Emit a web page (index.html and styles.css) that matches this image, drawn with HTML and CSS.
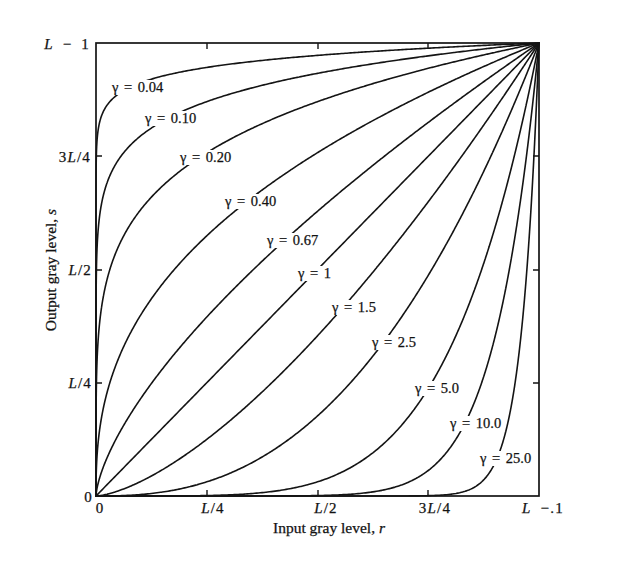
FILE: index.html
```html
<!DOCTYPE html>
<html>
<head>
<meta charset="utf-8">
<title>Gamma transformation curves</title>
<link rel="stylesheet" href="styles.css">
</head>
<body>
<div class="figure">
<svg class="chart" id="chart" width="624" height="569" viewBox="0 0 624 569">
  <g class="curves" id="curves"></g>
  <g class="masks" id="masks"></g>
  <g class="gamma-labels" id="labels">
    <text x="112" y="92">γ = 0.04</text>
    <text x="145" y="123">γ = 0.10</text>
    <text x="180" y="162">γ = 0.20</text>
    <text x="225" y="206">γ = 0.40</text>
    <text x="267" y="245">γ = 0.67</text>
    <text x="298" y="278">γ = 1</text>
    <text x="332" y="312">γ = 1.5</text>
    <text x="372" y="347">γ = 2.5</text>
    <text x="415" y="393">γ = 5.0</text>
    <text x="450" y="428">γ = 10.0</text>
    <text x="480" y="463">γ = 25.0</text>
  </g>
  <rect class="frame" x="96" y="43" width="443" height="453"></rect>
  <path class="ticks" d="M207 43v6M318 43v6M428 43v6M207 496v-6M318 496v-6M428 496v-6M96 156h6M96 270h6M96 383h6M539 156h-6M539 270h-6M539 383h-6"></path>
  <g class="axis-labels">
    <text class="wide" x="90" y="49" text-anchor="end"><tspan class="it">L</tspan> − 1</text>
    <text x="91" y="162" text-anchor="end">3<tspan class="it">L</tspan>/4</text>
    <text x="92" y="275" text-anchor="end"><tspan class="it">L</tspan>/2</text>
    <text x="92" y="388" text-anchor="end"><tspan class="it">L</tspan>/4</text>
    <text x="93" y="502" text-anchor="end">0</text>
    <text x="100" y="513" text-anchor="middle">0</text>
    <text x="213" y="513" text-anchor="middle"><tspan class="it">L</tspan>/4</text>
    <text x="326" y="513" text-anchor="middle"><tspan class="it">L</tspan>/2</text>
    <text x="435" y="513" text-anchor="middle">3<tspan class="it">L</tspan>/4</text>
    <text class="wide" x="543" y="513" text-anchor="middle"><tspan class="it">L</tspan> −.1</text>
    <text class="title" x="329" y="533" text-anchor="middle">Input gray level, <tspan class="it">r</tspan></text>
    <text class="title" x="0" y="0" text-anchor="middle" transform="translate(56 270) rotate(-90)">Output gray level, <tspan class="it">s</tspan></text>
  </g>
</svg>
</div>
<script src="script.js"></script>
</body>
</html>
```

FILE: styles.css
```css
html, body {
  margin: 0;
  padding: 0;
  background: #ffffff;
}

.figure {
  width: 624px;
  height: 569px;
  overflow: hidden;
}

.chart {
  display: block;
  font-family: "Liberation Serif", "Times New Roman", serif;
}

.curves path {
  fill: none;
  stroke: #141414;
  stroke-width: 1.6;
  stroke-linejoin: round;
  stroke-linecap: round;
}

.masks rect {
  fill: #ffffff;
}

.gamma-labels text {
  font-size: 14.5px;
  word-spacing: 2px;
  fill: #121212;
  stroke: #121212;
  stroke-width: 0.25;
}

.frame {
  fill: none;
  stroke: #141414;
  stroke-width: 1.7;
}

.ticks {
  fill: none;
  stroke: #141414;
  stroke-width: 1.4;
}

.axis-labels text {
  font-size: 15px;
  letter-spacing: 1.2px;
  fill: #121212;
  stroke: #121212;
  stroke-width: 0.25;
}

.axis-labels .wide {
  word-spacing: 4px;
}

.axis-labels .title {
  font-size: 15.5px;
  letter-spacing: 0;
}

.it {
  font-style: italic;
}
```

FILE: script.js
```js
(function () {
  var ns = "http://www.w3.org/2000/svg";
  var x0 = 96, y0 = 496, w = 443, h = 453;
  var gammas = [0.04, 0.1, 0.2, 0.4, 0.67, 1, 1.5, 2.5, 5, 10, 25];
  var curves = document.getElementById("curves");
  var N = 240;
  gammas.forEach(function (g) {
    var pts = [];
    for (var i = 0; i <= N; i++) {
      var t = i / N;
      pts.push([t, Math.pow(t, g)]);
      pts.push([Math.pow(t, 1 / g), t]);
    }
    pts.sort(function (a, b) { return a[0] - b[0] || a[1] - b[1]; });
    var d = "";
    pts.forEach(function (p, k) {
      var x = (x0 + p[0] * w).toFixed(2);
      var y = (y0 - p[1] * h).toFixed(2);
      d += (k === 0 ? "M" : "L") + x + " " + y;
    });
    var path = document.createElementNS(ns, "path");
    path.setAttribute("d", d);
    curves.appendChild(path);
  });
  var masks = document.getElementById("masks");
  var labels = document.querySelectorAll("#labels text");
  labels.forEach(function (t) {
    var b = t.getBBox();
    var r = document.createElementNS(ns, "rect");
    r.setAttribute("x", b.x - 3);
    r.setAttribute("y", b.y + 1);
    r.setAttribute("width", b.width + 6);
    r.setAttribute("height", b.height - 1);
    masks.appendChild(r);
  });
})();
```
